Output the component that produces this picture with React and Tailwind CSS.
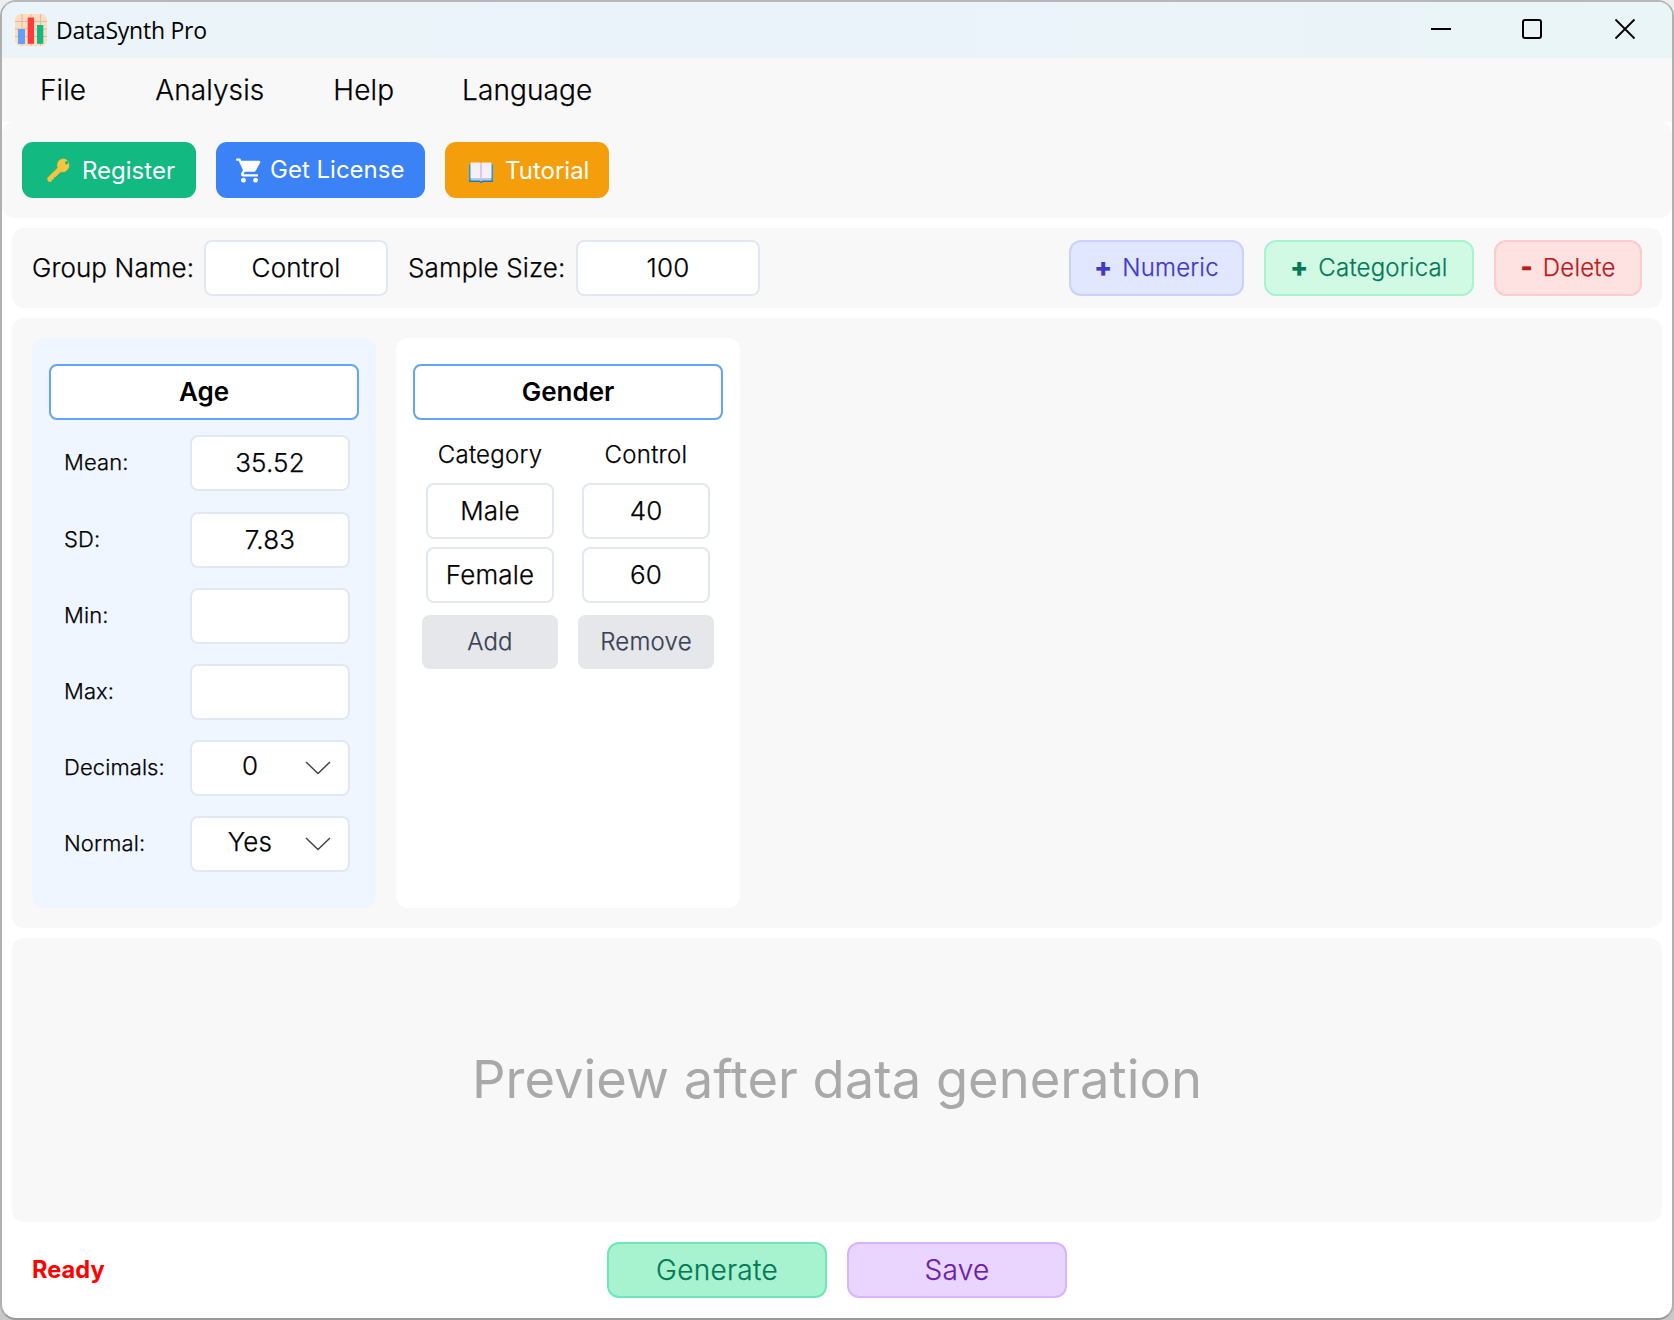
import { useState } from "react";
import { MdShoppingCart } from "react-icons/md";

const menus = [
  { name: "File", style: "ml-[38px]" },
  { name: "Analysis", style: "ml-[69px]" },
  { name: "Help", style: "ml-[69px]" },
  { name: "Language", style: "ml-[68px]" },
];

const Logo = () => (
  <svg width="32" height="32" viewBox="0 0 32 32">
    <rect width="32" height="32" rx="6" fill="#fedcc0" />
    <path d="M0 7.5H32M0 15H32M0 22.5H32M7 0V32M16 0V32M25.5 0V32" stroke="#d9bda6" strokeWidth="1" />
    <rect x="3" y="15" width="7" height="15" fill="#619ff8" />
    <rect x="12.7" y="3.5" width="6.3" height="26.3" fill="#ff3b3b" />
    <rect x="22" y="11" width="6.3" height="18.8" fill="#12b981" />
  </svg>
);

const KeyIcon = () => (
  <svg width="24" height="24" viewBox="0 0 24 24">
    <path
      fillRule="evenodd"
      d="M17 .4a6.8 6.8 0 0 0-6.4 9.3L.7 19.6c-.5.5-.5 1-.4 1.600l.4 1.600c.2.7.7 1 1.500 1h1.500c.6 0 1-.4 1-1v-1.300h1.400c.5 0 .9-.4.9-.9v-1.400l1.600-.2 5-5A6.900 6.900 0 1 0 17 .4Zm2.700 2.700a1.700 1.700 0 1 1 0 3.400 1.700 1.700 0 0 1 0-3.400Z"
      fill="#fbc33c"
    />
  </svg>
);

const BookIcon = () => (
  <svg className="mt-1" width="24" height="21" viewBox="0 0 24 21">
    <path d="M0 2.500h24v17.500H13.500l-1.500 1-1.500-1H0Z" fill="#1b9de2" />
    <path d="M0 18.300h24V20H13.500l-1.500 1-1.500-1H0Z" fill="#0f7fc4" />
    <path d="M1.500 17.500 3 16.500h7.500l1.500 1 1.500-1H21l1.500 1v1H13.500l-1.500 1-1.500-1h-9Z" fill="#cdbfdc" />
    <path d="M1.500 1.200Q1.500.5 2.300.5h7.700Q11.500.5 12 1.800 12.500.5 14 .5h7.700q.8 0 .8.700V16.500h-8.700q-1.300 0-1.800 1-.5-1-1.800-1H1.500Z" fill="#f4effa" />
    <path d="M12 1.800v15.700" stroke="#b9a9cd" strokeWidth="1" />
  </svg>
);

const Field = ({ children, className = "" }) => (
  <div className={`flex h-14 items-center justify-center rounded-lg border-2 border-slate-200 bg-white pb-px text-[26px] tracking-[0.15px] ${className}`}>
    {children}
  </div>
);

const NumericRow = ({ label, value, select, className }) => (
  <div className={`flex items-center justify-between pl-[15px] pr-[9px] ${className}`}>
    <span className="pb-px text-[22px] tracking-[0.1px]">{label}</span>
    {select ? (
      <Field className="w-40">
        <span className="w-[113px] shrink-0 pb-1 pl-[3px] text-center">{value}</span>
        <svg className="mr-[17px] shrink-0" width="26" height="14" viewBox="0 0 26 14" fill="none" stroke="#444" strokeWidth="1.500">
          <path d="M1 1l12 11.500L25 1" />
        </svg>
      </Field>
    ) : (
      <Field className="w-40">{value}</Field>
    )}
  </div>
);

const App = () => {
  const [categories] = useState([
    { name: "Male", count: 40 },
    { name: "Female", count: 60 },
  ]);

  return (
    <div className="h-screen bg-gradient-to-b from-[#eeeeee] to-[#c8c8c8] text-black">
      <div className="flex h-full flex-col overflow-hidden rounded-2xl border-2 border-t-[#b8b8b8] border-r-[#b0b0b0] border-b-[#999999] border-l-[#b0b0b0] bg-white font-['Inter',sans-serif] font-light [-webkit-text-stroke-width:0.25px]">
        {/* Title bar */}
        <header className="flex h-14 shrink-0 items-center bg-gradient-to-r from-[#ebf4f8] via-[#eaf3fa] to-[#eaf5f7] pr-[36px] pl-[13px]">
          <Logo />
          <h1 className="ml-[9px] font-['Open_Sans',sans-serif] text-[23px] font-normal tracking-[-0.25px] [-webkit-text-stroke-width:0]">DataSynth Pro</h1>
          <div className="ml-auto flex items-center pb-0.5">
            <svg width="22" height="22" viewBox="0 0 22 22" stroke="#000" strokeWidth="2">
              <path d="M1 11h20" />
            </svg>
            <svg className="mr-[71px] ml-[69px]" width="22" height="22" viewBox="0 0 22 22" fill="none" stroke="#000" strokeWidth="2">
              <rect x="2" y="2" width="18" height="18" rx="2" />
            </svg>
            <svg width="22" height="22" viewBox="0 0 22 22" stroke="#000" strokeWidth="1.800">
              <path d="M1.500 1.500l19 19M20.500 1.500l-19 19" />
            </svg>
          </div>
        </header>

        {/* Menu */}
        <nav className="flex h-16 shrink-0 items-center bg-[#f8f8f8] text-[28px] tracking-[0.1px]">
          {menus.map((m) => (
            <span key={m.name} className={m.style}>{m.name}</span>
          ))}
        </nav>

        {/* Toolbar */}
        <div className="flex h-24 shrink-0 items-center gap-5 rounded-xl bg-[#f8f8f8] px-5 text-[24px] font-normal text-white [-webkit-text-stroke-width:0]">
          <button className="flex h-14 w-[174px] items-center rounded-[11px] bg-[#12b981] pl-[25px]">
            <KeyIcon />
            <span className="ml-[11px] pt-0.5">Register</span>
          </button>
          <button className="flex h-14 w-[209px] items-center rounded-[11px] bg-[#3b82f6] pl-[19px]">
            <MdShoppingCart size={29} />
            <span className="ml-[6px]">Get License</span>
          </button>
          <button className="flex h-14 w-[164px] items-center rounded-[11px] bg-[#f59e0b] pl-6">
            <BookIcon />
            <span className="ml-3 pt-0.5">Tutorial</span>
          </button>
        </div>

        <main className="flex min-h-0 flex-1 flex-col gap-2.5 px-2.5 pt-2.5">
          {/* Group settings */}
          <div className="flex h-20 shrink-0 items-center rounded-xl bg-[#f8f8f8] px-5 text-[26px] tracking-[0.1px]">
            <span className="w-[172px] pb-px">Group Name:</span>
            <Field className="w-[184px]">Control</Field>
            <span className="ml-5 w-[168px] pb-px">Sample Size:</span>
            <Field className="w-[184px]">100</Field>
            <div className="ml-auto flex gap-5 text-[24px] tracking-[0.2px]">
              <button className="flex h-14 w-[175px] items-center justify-center gap-2.5 rounded-xl border-2 border-[#c7d2fe] bg-[#e0e7ff] text-[#4338ca]">
                <span className="pb-0.5 text-[26px] leading-none font-extrabold">+</span> Numeric
              </button>
              <button className="flex h-14 w-[210px] items-center justify-center gap-2.5 rounded-xl border-2 border-[#a7f3d0] bg-[#d1fae5] text-[#047857]">
                <span className="pb-0.5 text-[26px] leading-none font-extrabold">+</span> Categorical
              </button>
              <button className="flex h-14 w-[148px] items-center justify-center gap-2.5 rounded-xl border-2 border-[#fecaca] bg-[#fee2e2] text-[#b91c1c]">
                <span className="pb-0.5 text-[26px] leading-none font-extrabold">-</span> Delete
              </button>
            </div>
          </div>

          {/* Variables */}
          <div className="flex h-[610px] shrink-0 gap-5 rounded-xl bg-[#f8f8f8] p-5">
            <section className="flex w-[344px] flex-col rounded-xl bg-[#eff6ff] px-[17px] pt-[26px]">
              <div className="flex h-14 items-center justify-center rounded-lg border-2 border-[#60a5fa] bg-white pb-px text-[26px] font-semibold [-webkit-text-stroke-width:0]">Age</div>
              <NumericRow label="Mean:" value="35.52" className="mt-[15px]" />
              <NumericRow label="SD:" value="7.83" className="mt-[21px]" />
              <NumericRow label="Min:" value="" className="mt-5" />
              <NumericRow label="Max:" value="" className="mt-5" />
              <NumericRow label="Decimals:" value="0" select className="mt-5" />
              <NumericRow label="Normal:" value="Yes" select className="mt-5" />
            </section>

            <section className="flex w-[344px] flex-col rounded-xl bg-white px-[17px] pt-[26px]">
              <div className="flex h-14 items-center justify-center rounded-lg border-2 border-[#60a5fa] bg-white pb-px text-[26px] font-semibold [-webkit-text-stroke-width:0]">Gender</div>
              <div className="mt-4 grid grid-cols-[136px_136px] justify-center gap-x-5 text-center text-[24px] leading-[38px] tracking-[0.25px]">
                <span>Category</span>
                <span>Control</span>
              </div>
              <div className="mt-[9px] grid grid-cols-[128px_128px] justify-center gap-x-7 gap-y-2">
                {categories.map((c) => [
                  <Field key={c.name}>{c.name}</Field>,
                  <Field key={c.name + "-n"}>{c.count}</Field>,
                ])}
              </div>
              <div className="mt-3 grid grid-cols-[136px_136px] justify-center gap-x-5 text-[24px] tracking-[0.2px] text-[#374151]">
                <button className="h-[54px] rounded-lg bg-gray-200">Add</button>
                <button className="h-[54px] rounded-lg bg-gray-200">Remove</button>
              </div>
            </section>
          </div>

          {/* Preview */}
          <div className="flex h-[284px] shrink-0 items-center justify-center rounded-xl bg-[#f8f8f8] pb-0.5 text-[52.5px] font-normal text-[#a9a9a9] [-webkit-text-stroke-width:0]">
            Preview after data generation
          </div>
        </main>

        <footer className="grid h-24 shrink-0 grid-cols-[1fr_auto_1fr] items-center px-[30px] text-[28px]">
          <span className="text-[23.67px] font-bold text-[#ff0000] [-webkit-text-stroke-width:0]">Ready</span>
          <div className="flex gap-5 tracking-[0.3px]">
            <button className="h-14 w-[220px] rounded-xl border-2 border-[#6ee7b7] bg-[#a7f3d0] text-[#047857]">Generate</button>
            <button className="h-14 w-[220px] rounded-xl border-2 border-[#d8b4fe] bg-[#e9d5ff] text-[#6b21a8]">Save</button>
          </div>
        </footer>
      </div>
    </div>
  );
};

export default App;
